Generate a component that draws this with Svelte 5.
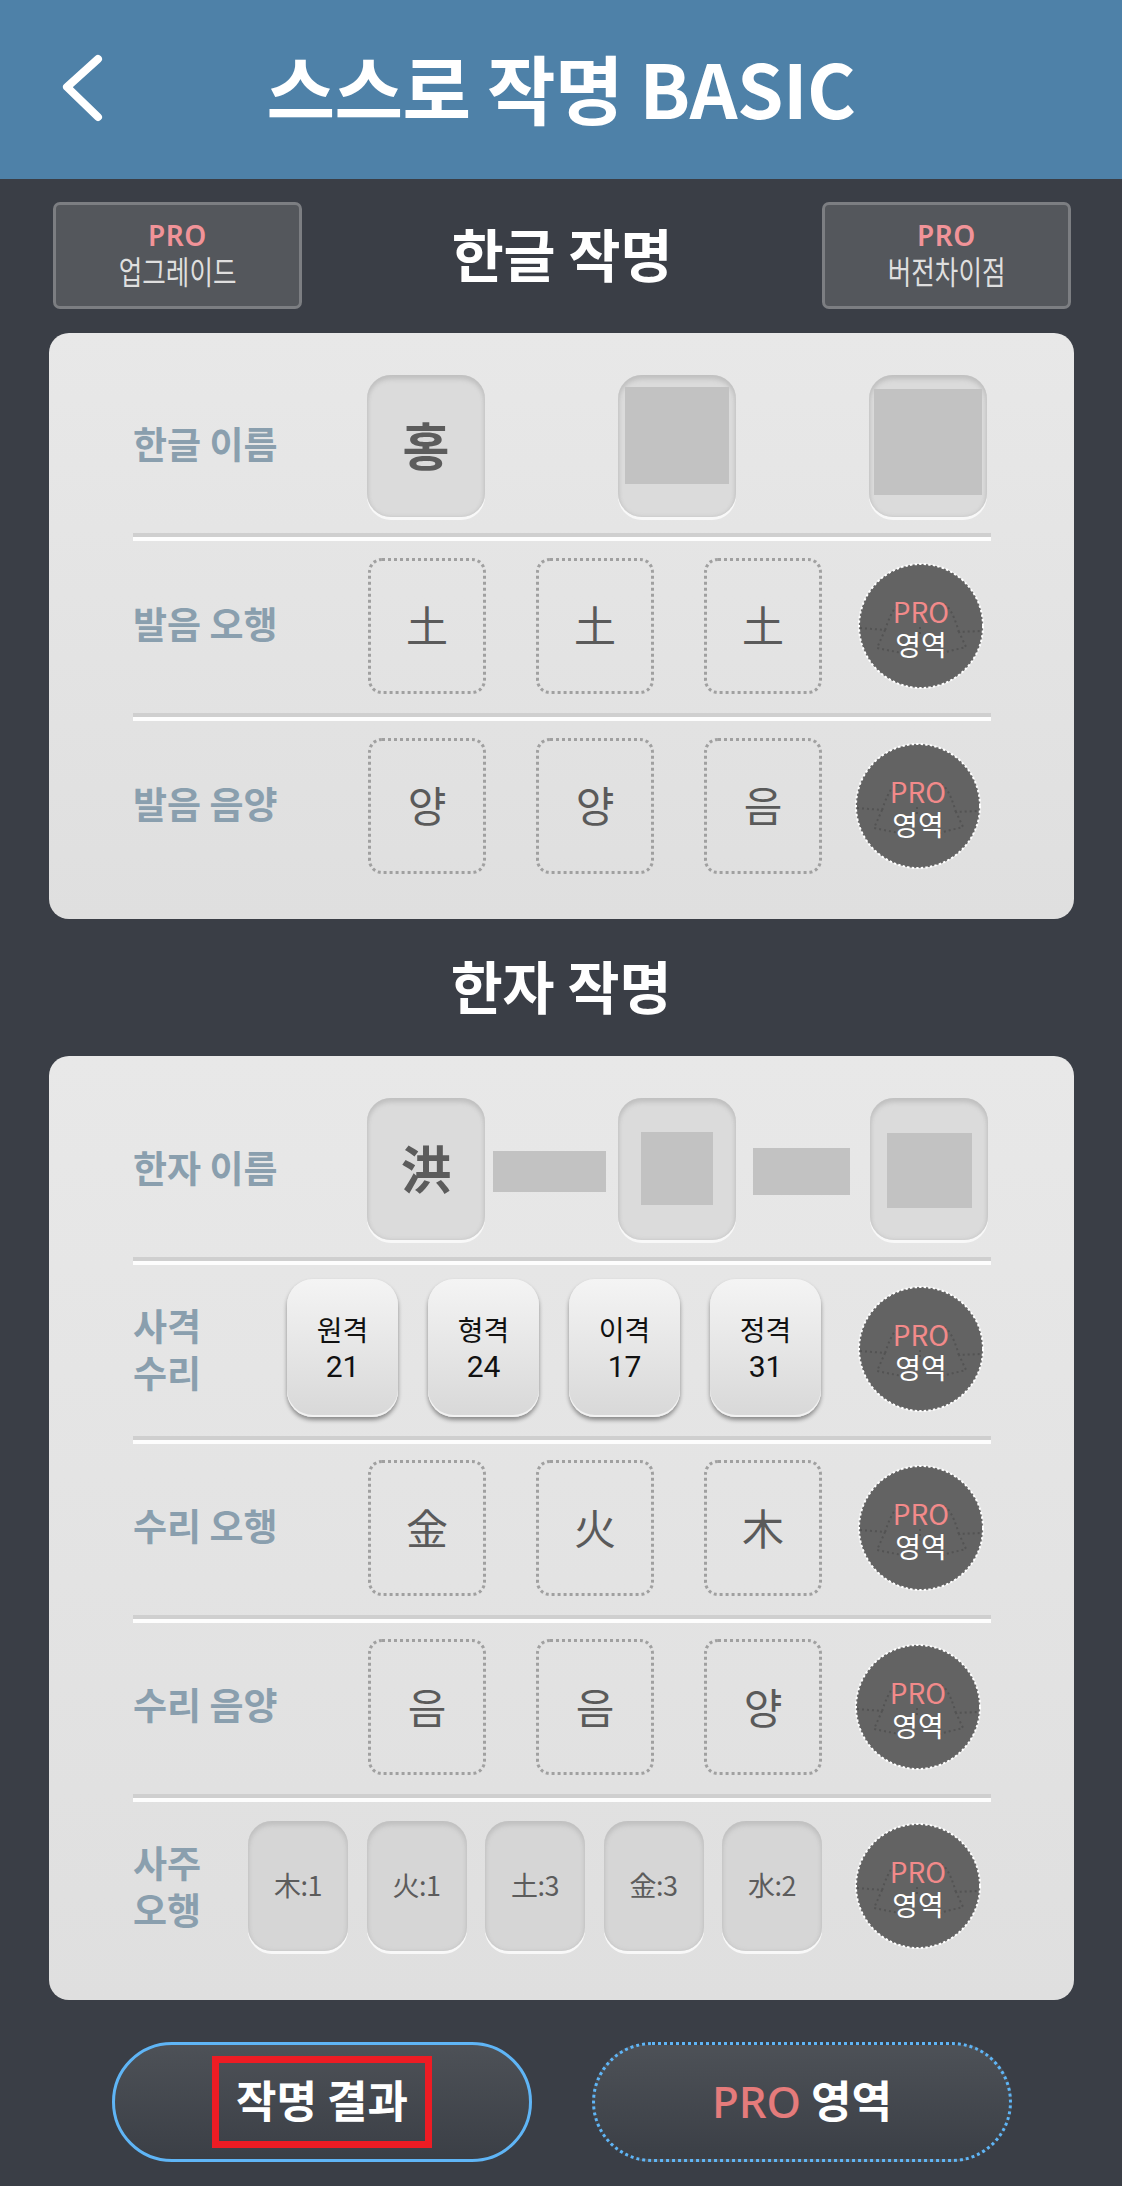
<script>
  const hangulName = [
    { ch: '홍' },
    { cover: { l: 7, t: 12, w: 104, h: 97 } },
    { cover: { l: 5, t: 14, w: 108, h: 106 } },
  ];
  const hanjaCells = [
    { ch: '洪' },
    { filler: 'a', cover: { l: 23, t: 34, w: 72, h: 73 } },
    { filler: 'b', cover: { l: 17, t: 35, w: 85, h: 75 } },
  ];
  const sagyeok = [
    ['원격', 21],
    ['형격', 24],
    ['이격', 17],
    ['정격', 31],
  ];
  const saju = ['木:1', '火:1', '土:3', '金:3', '水:2'];
</script>

{#snippet badge(left)}
  <div class="badge" class:left>
    <svg class="badge-bg" viewBox="0 0 126 126" width="126" height="126" aria-hidden="true">
      <circle cx="63" cy="63" r="62" fill="#636363" />
      <circle cx="63" cy="63" r="62" fill="none" stroke="#fff" stroke-width="2" stroke-dasharray="2.4 2.2" />
      <g fill="none" stroke="#535353" stroke-width="2" stroke-dasharray="2 3">
        <path d="M2 65 L27 67 L19 85 L44 90 M84 90 L108 84 L101 69 L124 68" />
        <path d="M27 67 C34 46 40 38 48 42 M101 69 C94 46 88 38 80 42" />
        <path d="M62 64 L62 74" />
      </g>
    </svg>
    <span class="pro">PRO</span>
    <span class="area">영역</span>
  </div>
{/snippet}

{#snippet dashedCells(chars)}
  <div class="cells dashed-cells">
    {#each chars as c}
      <div class="dashed">{c}</div>
    {/each}
  </div>
{/snippet}

<div class="page">
  <header class="topbar">
    <svg class="back" viewBox="0 0 48 72" width="48" height="72" aria-hidden="true">
      <path d="M38 8 L7 36 L38 66" transform="translate(0 -1)" fill="none" stroke="#fff" stroke-width="8" stroke-linecap="round" stroke-linejoin="round" />
    </svg>
    <h1>스스로 작명 BASIC</h1>
  </header>

  <div class="section-head first">
    <button class="pro-btn"><span class="pro">PRO</span><span class="sub">업그레이드</span></button>
    <h2>한글 작명</h2>
    <button class="pro-btn right"><span class="pro">PRO</span><span class="sub">버전차이점</span></button>
  </div>

  <section class="card card-a">
    <div class="row">
      <div class="label wide">한글 이름</div>
      <div class="cells name-cells">
        {#each hangulName as cell}
          <div class="inset">
            {cell.ch ?? ''}
            {#if cell.cover}
              <i class="cover" style="left:{cell.cover.l}px;top:{cell.cover.t}px;width:{cell.cover.w}px;height:{cell.cover.h}px"></i>
            {/if}
          </div>
        {/each}
      </div>
    </div>
    <div class="sep"></div>
    <div class="row">
      <div class="label wide">발음 오행</div>
      {@render dashedCells(['土', '土', '土'])}
      {@render badge(false)}
    </div>
    <div class="sep"></div>
    <div class="row">
      <div class="label wide">발음 음양</div>
      {@render dashedCells(['양', '양', '음'])}
      {@render badge(true)}
    </div>
  </section>

  <div class="section-head second">
    <h2>한자 작명</h2>
  </div>

  <section class="card card-b">
    <div class="row">
      <div class="label wide">한자 이름</div>
      <div class="cells hanja-cells">
        {#each hanjaCells as cell}
          {#if cell.filler}
            <i class="filler {cell.filler}"></i>
          {/if}
          <div class="inset">
            {cell.ch ?? ''}
            {#if cell.cover}
              <i class="cover" style="left:{cell.cover.l}px;top:{cell.cover.t}px;width:{cell.cover.w}px;height:{cell.cover.h}px"></i>
            {/if}
          </div>
        {/each}
      </div>
    </div>
    <div class="sep"></div>
    <div class="row">
      <div class="label two sagyeok-label">사격<br />수리</div>
      <div class="cells raised-cells">
        {#each sagyeok as [name, num]}
          <div class="raised"><span>{name}</span><span class="num">{num}</span></div>
        {/each}
      </div>
      {@render badge(false)}
    </div>
    <div class="sep"></div>
    <div class="row">
      <div class="label wide">수리 오행</div>
      {@render dashedCells(['金', '火', '木'])}
      {@render badge(false)}
    </div>
    <div class="sep"></div>
    <div class="row">
      <div class="label wide">수리 음양</div>
      {@render dashedCells(['음', '음', '양'])}
      {@render badge(true)}
    </div>
    <div class="sep"></div>
    <div class="row">
      <div class="label two saju-label">사주<br />오행</div>
      <div class="cells saju-cells">
        {#each saju as s}
          <div class="inset small">{s}</div>
        {/each}
      </div>
      {@render badge(true)}
    </div>
  </section>

  <div class="actions">
    <button class="action solid"><span class="marked">작명 결과</span></button>
    <button class="action dotted"><span class="action-text"><span class="pro-word">PRO</span> 영역</span></button>
  </div>
</div>

<style>
  :global(body) {
    margin: 0;
    background: #3a3e46;
  }

  .page {
    width: 1122px;
    height: 2186px;
    overflow: hidden;
    background: #3a3e46;
    font-family: "Noto Sans CJK KR", "Noto Sans", sans-serif;
    color: #fff;
  }

  /* Top bar */
  .topbar {
    height: 179px;
    background: #4e81a8;
    display: grid;
    grid-template-columns: 1fr auto 1fr;
    align-items: center;
  }

  .back {
    margin-left: 60px;
    margin-top: -3px;
  }

  h1 {
    margin: -5px 0 0;
    font-size: 74.5px;
    font-weight: 700;
    line-height: 1;
    letter-spacing: -0.5px;
    white-space: nowrap;
  }

  h2 {
    margin: 0 0 6px;
    font-size: 56.5px;
    font-weight: 700;
    line-height: 1;
    white-space: nowrap;
  }

  /* Section headings */
  .section-head {
    display: grid;
    grid-template-columns: 1fr auto 1fr;
    align-items: center;
  }

  .section-head.first {
    padding: 23px 51px 24px 53px;
  }

  .section-head.second {
    height: 137px;
    grid-template-columns: 1fr;
    justify-items: center;
  }

  .pro-btn {
    width: 249px;
    height: 107px;
    box-sizing: border-box;
    background: #54575c;
    border: 3px solid #7c7e82;
    border-radius: 7px;
    padding: 0 0 4px;
    font-family: inherit;
    display: flex;
    flex-direction: column;
    align-items: center;
    justify-content: center;
  }

  .pro-btn.right {
    justify-self: end;
  }

  .pro-btn .pro {
    font-family: "Noto Sans", sans-serif;
    font-size: 28px;
    line-height: 32px;
    font-weight: 600;
    letter-spacing: 0.5px;
    color: #f19398;
  }

  .pro-btn .sub {
    font-size: 32px;
    line-height: 38px;
    white-space: nowrap;
    transform: scaleX(0.8);
    color: #dfdfdf;
  }

  /* Cards */
  .card {
    margin: 0 48px 0 49px;
    padding: 0 83px 0 84px;
    border-radius: 20px;
    background: linear-gradient(180deg, #e8e8e8, #dfdfdf);
  }

  .card-a {
    height: 586px;
    padding-top: 28px;
    box-sizing: border-box;
  }

  .card-a .row {
    height: 172px;
  }

  .card-b {
    height: 944px;
    padding-top: 30px;
    box-sizing: border-box;
  }

  .card-b .row {
    height: 171px;
  }

  .row {
    display: flex;
    align-items: center;
    padding-bottom: 3px;
    box-sizing: border-box;
  }

  .sep {
    height: 4px;
    background: #cfcfcf;
    border-bottom: 4px solid #fdfdfd;
  }

  .label {
    flex: none;
    color: #8a9fae;
    font-size: 37px;
    font-weight: 700;
    line-height: 47px;
    white-space: nowrap;
  }

  .label.wide {
    width: 234px;
    margin-bottom: 5px;
  }

  .sagyeok-label {
    width: 154px;
  }

  .saju-label {
    width: 115px;
  }

  .cells {
    display: flex;
    align-items: center;
  }

  .name-cells {
    gap: 133px;
  }

  .hanja-cells {
    margin-bottom: 3px;
  }

  .dashed-cells {
    gap: 50px;
    margin-left: 1px;
  }

  .raised-cells {
    gap: 30px;
    margin-bottom: 3px;
  }

  .saju-cells {
    gap: 18.5px;
  }

  /* Pressed name cell */
  .inset {
    position: relative;
    width: 118px;
    height: 142px;
    box-sizing: border-box;
    padding-bottom: 4px;
    border-radius: 24px;
    background: #dbdbdb;
    box-shadow:
      inset 0 4px 5px #c0c0c0,
      inset 0 0 4px #c4c4c4,
      0 3px 0 #f8f8f8;
    display: flex;
    align-items: center;
    justify-content: center;
    color: #5c5c5c;
    font-size: 51px;
    font-weight: 700;
  }

  .inset.small {
    width: 100px;
    height: 130px;
    background: #d6d6d6;
    font-size: 27px;
    font-weight: 400;
    letter-spacing: -0.5px;
  }

  .cover {
    position: absolute;
    background: #c2c2c2;
  }

  .filler {
    flex: none;
    background: #c2c2c2;
  }

  .filler.a {
    width: 113px;
    height: 41px;
    margin: 6px 12px 0 8px;
  }

  .filler.b {
    width: 97px;
    height: 47px;
    margin: 6px 20px 0 17px;
  }

  .dashed {
    width: 118px;
    height: 136px;
    box-sizing: border-box;
    padding-bottom: 4px;
    border: 3.5px dotted #a0a0a0;
    border-radius: 14px;
    display: flex;
    align-items: center;
    justify-content: center;
    color: #5a5a5a;
    font-size: 42px;
  }

  .raised {
    width: 111px;
    height: 138px;
    box-sizing: border-box;
    border-radius: 26px;
    background: linear-gradient(180deg, #f4f4f4, #d8d8d8);
    box-shadow:
      inset 0 -2px 0 #f2f2f2,
      0 3px 4px rgba(0, 0, 0, 0.4);
    display: flex;
    flex-direction: column;
    align-items: center;
    justify-content: center;
    color: #111;
    font-size: 28px;
    line-height: 36px;
  }

  .num {
    margin-top: 2px;
    font-family: Roboto, sans-serif;
    font-size: 30px;
  }

  /* PRO badge */
  .badge {
    position: relative;
    flex: none;
    width: 126px;
    height: 126px;
    box-sizing: border-box;
    padding-top: 4px;
    margin: 0 7px 0 auto;
    display: flex;
    flex-direction: column;
    align-items: center;
    justify-content: center;
  }

  .badge.left {
    margin-right: 10px;
  }

  .badge-bg {
    position: absolute;
    inset: 0;
  }

  .badge .pro,
  .badge .area {
    position: relative;
  }

  .badge .pro {
    color: #f28a8a;
    font-size: 28px;
    line-height: 33px;
  }

  .badge .area {
    color: #fff;
    font-size: 28px;
    line-height: 33px;
  }

  /* Bottom actions */
  .actions {
    display: flex;
    gap: 60px;
    padding: 42px 0 0 112px;
  }

  .action {
    width: 420px;
    height: 120px;
    box-sizing: border-box;
    border-radius: 60px;
    background: linear-gradient(180deg, #4d5157, #3b3f46);
    padding: 0;
    color: #fff;
    font-family: inherit;
    font-size: 44px;
    font-weight: 700;
    display: flex;
    align-items: center;
    justify-content: center;
  }

  .action.solid {
    border: 3px solid #5fb5f6;
  }

  .action.dotted {
    border: 3px dotted #5fb5f6;
  }

  .action-text {
    margin-bottom: 6px;
  }

  .marked {
    width: 220px;
    height: 92px;
    box-sizing: border-box;
    padding-bottom: 6px;
    border: 7px solid #ed1c24;
    display: flex;
    align-items: center;
    justify-content: center;
  }

  .pro-word {
    color: #e57b7b;
    font-family: "Noto Sans", sans-serif;
    font-weight: 500;
  }
</style>
